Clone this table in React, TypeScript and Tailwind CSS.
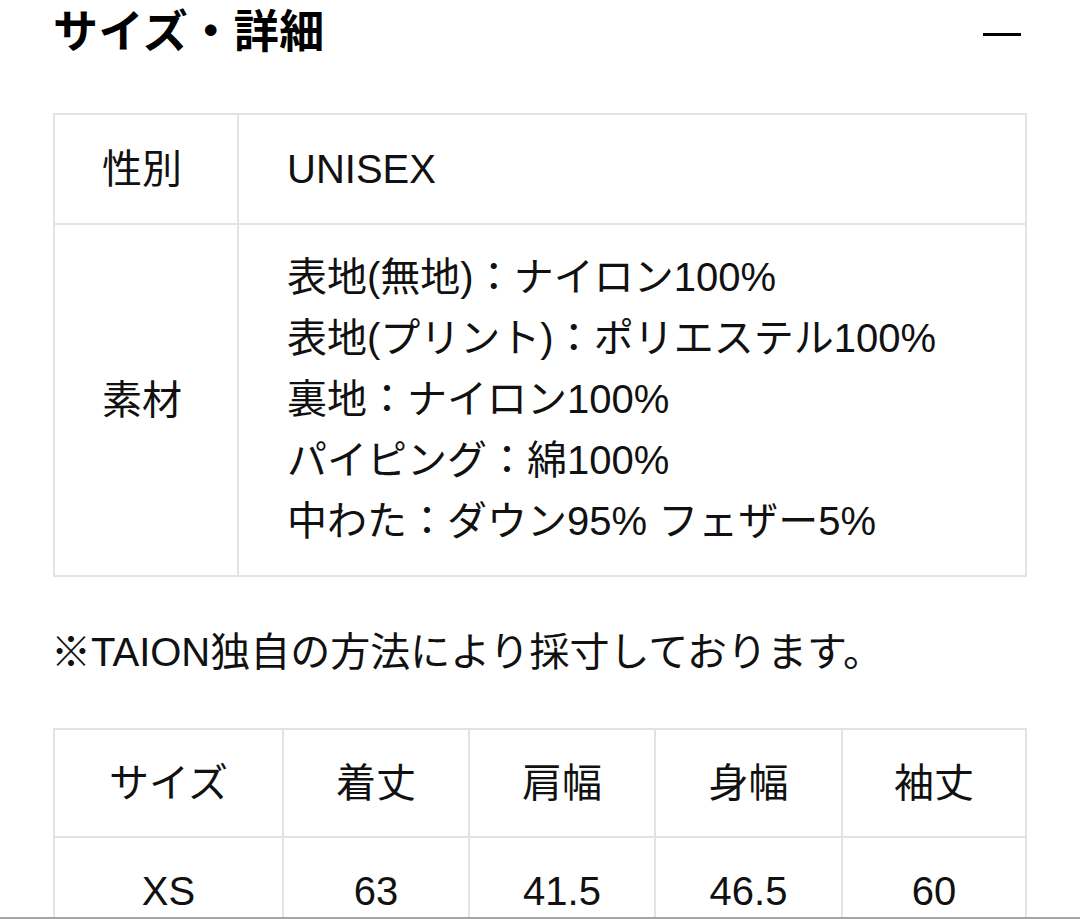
import React from "react";

const FONT = "font-['Liberation_Sans','Noto_Sans_CJK_JP',sans-serif]";

const materials = [
  "表地(無地)：ナイロン100%",
  "表地(プリント)：ポリエステル100%",
  "裏地：ナイロン100%",
  "パイピング：綿100%",
  "中わた：ダウン95% フェザー5%",
];

const sizeHead = ["サイズ", "着丈", "肩幅", "身幅", "袖丈"];
const sizeRows = [["XS", "63", "41.5", "46.5", "60"]];

const cell = "border-r-2 border-b-2 border-[#e3e3e3]";

export default function App() {
  return (
    <div className={`h-[919px] w-[1080px] flex flex-col bg-white text-[#111] ${FONT}`}>
      <div className="flex-1 overflow-hidden px-[53px]">
        {/* header */}
        <div className="h-[58px] flex items-center justify-between">
          <h2 className="text-[45px] leading-[58px] font-bold tracking-[0.5px] font-['Noto_Sans_CJK_JP',sans-serif] text-black">
            サイズ・詳細
          </h2>
          <div className="w-[38px] h-[3px] bg-black mt-[11px] mr-[6px]" />
        </div>

        {/* details table */}
        <div className="mt-[55px] grid grid-cols-[184px_1fr] border-l-2 border-t-2 border-[#e3e3e3] text-[40px]">
          <div className={`${cell} h-[110px] flex items-center justify-center pr-[8px]`}>性別</div>
          <div className={`${cell} h-[110px] flex items-center pl-[48px]`}>UNISEX</div>
          <div className={`${cell} flex items-center justify-center pr-[8px]`}>素材</div>
          <div className={`${cell} pl-[48px] pt-[22px] pb-[23px] leading-[61px]`}>
            {materials.map((m) => (
              <div key={m}>{m}</div>
            ))}
          </div>
        </div>

        <p className="mt-[45px] mb-[45px] text-[40px] leading-[61px] -ml-[2px]">
          ※TAION独自の方法により採寸しております。
        </p>

        {/* size table */}
        <div className="grid grid-cols-[229px_186px_186px_187px_1fr] border-l-2 border-t-2 border-[#e3e3e3] text-[40px]">
          {sizeHead.map((h) => (
            <div key={h} className={`${cell} h-[108px] flex items-center justify-center`}>
              {h}
            </div>
          ))}
          {sizeRows.map((r) =>
            r.map((v, i) => (
              <div key={i} className={`${cell} h-[108px] flex items-center justify-center`}>
                {v}
              </div>
            ))
          )}
        </div>
      </div>
      <div className="h-[2px] bg-[#a6a6a6]" />
    </div>
  );
}
